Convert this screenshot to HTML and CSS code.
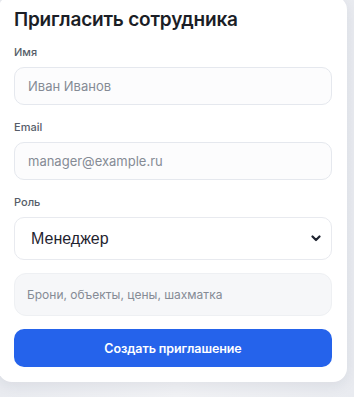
FILE: index.html
```html
<!DOCTYPE html>
<html lang="ru">
<head>
<meta charset="utf-8">
<link rel="stylesheet" href="styles.css">
</head>
<body>
<div class="card">
  <h2 class="title">Пригласить сотрудника</h2>
  <div class="field">
    <label class="label">Имя</label>
    <div class="input"><span class="ph">Иван Иванов</span></div>
  </div>
  <div class="field">
    <label class="label">Email</label>
    <div class="input"><span class="ph">manager@example.ru</span></div>
  </div>
  <div class="field">
    <label class="label">Роль</label>
    <div class="select">
      <span class="sel-text">Менеджер</span>
      <svg class="chev" width="10" height="7" viewBox="0 0 10 7"><path d="M1.5 1.5 L5 5 L8.5 1.5" fill="none" stroke="#1f2430" stroke-width="2.2" stroke-linecap="round" stroke-linejoin="round"/></svg>
    </div>
  </div>
  <div class="area"><span class="ph ph-sm">Брони, объекты, цены, шахматка</span></div>
  <button class="btn">Создать приглашение</button>
</div>
</body>
</html>
```
FILE: styles.css
```css
html, body {
  margin: 0;
  padding: 0;
}
body {
  width: 354px;
  height: 397px;
  overflow: hidden;
  background: linear-gradient(90deg, #e9ebf0 0%, #f1f2f5 50%, #e9ebf0 100%);
  font-family: Inter, "Noto Sans", sans-serif;
}
.card {
  box-sizing: border-box;
  width: 349px;
  margin: -4px 0 0 -2px;
  padding: 12px 15px 15px 16px;
  background: #ffffff;
  border-radius: 14px;
  box-shadow: 0 4px 14px rgba(30, 40, 60, 0.08);
  display: flex;
  flex-direction: column;
}
.title {
  margin: 0 0 13px;
  font-size: 19px;
  line-height: 24px;
  font-weight: 600;
  color: #1b1e26;
  letter-spacing: -0.2px;
}
.field {
  display: flex;
  flex-direction: column;
  gap: 8px;
  margin-bottom: 15px;
}
.label {
  font-size: 11px;
  line-height: 14px;
  font-weight: 500;
  color: #565d69;
}
.input {
  box-sizing: border-box;
  height: 38px;
  border: 1px solid #e5e8ee;
  border-radius: 10px;
  background: #fcfcfd;
  display: flex;
  align-items: center;
  padding: 0 12px 0 13px;
}
.ph {
  font-size: 13px;
  color: #858b95;
}
.ph-sm {
  font-size: 12px;
}
.select {
  box-sizing: border-box;
  height: 43px;
  margin-bottom: -2px;
  border: 1px solid #e8eaef;
  border-radius: 10px;
  background: #ffffff;
  display: flex;
  align-items: center;
  justify-content: space-between;
  padding: 0 10px 0 16px;
}
.sel-text {
  font-family: "Liberation Sans", Arial, sans-serif;
  font-size: 16px;
  color: #1f2430;
}
.area {
  box-sizing: border-box;
  height: 43px;
  border: 1px solid #eef0f3;
  border-radius: 12px;
  background: #f6f7f9;
  display: flex;
  align-items: center;
  padding: 0 12px 0 12px;
  margin-bottom: 13px;
}
.btn {
  height: 38px;
  border: none;
  border-radius: 10px;
  background: #2563eb;
  color: #ffffff;
  font-family: Inter, "Noto Sans", sans-serif;
  font-size: 12.5px;
  font-weight: 600;
  letter-spacing: -0.1px;
  cursor: pointer;
}
```
